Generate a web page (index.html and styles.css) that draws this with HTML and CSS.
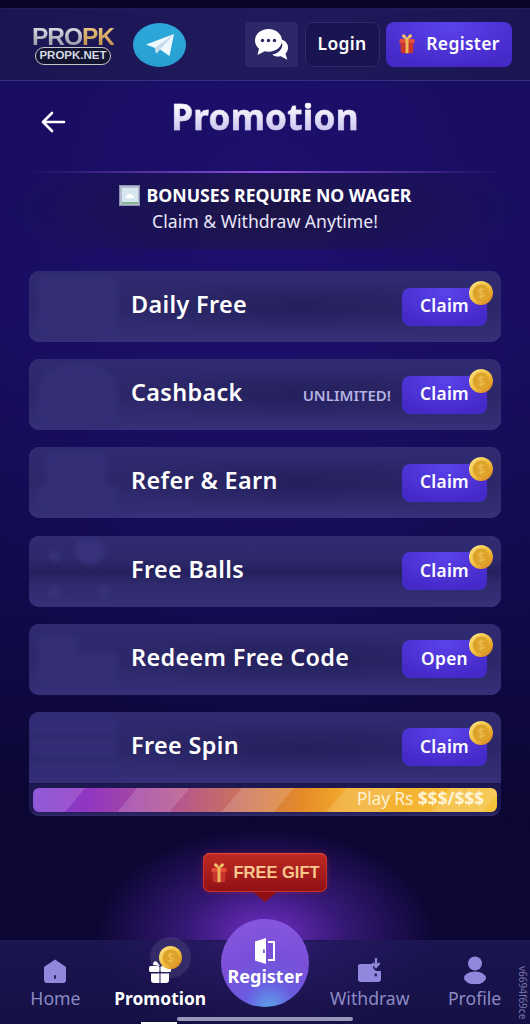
FILE: index.html
```html
<!DOCTYPE html>
<html lang="en">
<head>
<meta charset="utf-8">
<title>Promotion</title>
<link rel="stylesheet" href="styles.css">
</head>
<body>
<svg class="defs" width="0" height="0" aria-hidden="true">
  <defs>
    <linearGradient id="coinFill" x1="0" y1="0" x2="1" y2="1">
      <stop offset="0" stop-color="#ffe68a"/><stop offset="0.55" stop-color="#efbc3c"/><stop offset="1" stop-color="#d0761c"/>
    </linearGradient>
    <symbol id="coin" viewBox="0 0 24 24">
      <circle cx="12" cy="12" r="12" fill="url(#coinFill)"/>
      <circle cx="12" cy="12" r="8.400" fill="#dca22a"/>
      <path d="M15 8.800c-.8-.9-4.800-1.300-5 .9-.2 2.500 5.200 1.700 5 4.400-.2 2.100-4.400 1.800-5.600.7M12 6.500v11" fill="none" stroke="#eebf4c" stroke-width="1.200"/>
    </symbol>
    <symbol id="gift" viewBox="0 0 24 28">
      <path d="M12 8C9 8 5 6 5.500 3.200 6 .8 10 1 12 7c2-6 6-6.200 6.500-3.800C19 6 15 8 12 8Z" fill="#f1c264"/>
      <rect x="2" y="8" width="20" height="6" rx="1.500" fill="#e8503a"/>
      <path d="M3.500 13h17v11a3 3 0 0 1-3 3h-11a3 3 0 0 1-3-3Z" fill="#c9352c"/>
      <rect x="10" y="8" width="4" height="19" fill="#f0b65a"/>
    </symbol>
  </defs>
</svg>

<div class="page">
  <div class="status"></div>

  <header class="topbar">
    <div class="logo">
      <div class="logo-word"><span class="logo-silver">PRO</span><span class="logo-gold">PK</span></div>
      <div class="logo-pill">PROPK.NET</div>
    </div>
    <div class="telegram">
      <svg width="30" height="24" viewBox="0 0 30 24">
        <path d="M1 11.500 29 1 24.500 23 15 16.500 11 20.500 10 15Z" fill="#eef7fc"/>
        <path d="M10 15 29 1 15 16.500 12 20Z" fill="#c2dcec"/>
      </svg>
    </div>
    <div class="top-actions">
      <div class="chat-btn">
        <svg width="36" height="34" viewBox="0 0 36 34">
          <path d="M27 11.500c5 1 7.500 5 7 9-.3 2.300-1.300 4-2.500 5.200l1.800 6-6.500-3.500c-3 .8-6.300.3-8.500-1.700 6-1 10-5 10-10Z" fill="#fff"/>
          <path d="M14.500 1C6.800 1 1 6 1 12.500c0 3.300 1.500 6.200 4 8.300L3.500 27l7.200-3.700c1.200.3 2.500.4 3.800.4 7.700 0 13.500-5 13.500-11.200S22.200 1 14.500 1Z" fill="#fff"/>
          <circle cx="8.500" cy="12.500" r="1.700" fill="#2d2868"/><circle cx="14.500" cy="12.500" r="1.700" fill="#2d2868"/><circle cx="20.500" cy="12.500" r="1.700" fill="#2d2868"/>
        </svg>
      </div>
      <button class="login-btn">Login</button>
      <button class="register-btn">
        <svg class="reg-gift" width="18" height="21"><use href="#gift"/></svg>
        Register
      </button>
    </div>
  </header>

  <div class="title-row">
    <svg class="back" width="26" height="24" viewBox="0 0 26 24">
      <path d="M24 12H3M12 3l-9 9 9 9" fill="none" stroke="#fff" stroke-width="2.600" stroke-linecap="round" stroke-linejoin="round"/>
    </svg>
    <h1 class="title">Promotion</h1>
  </div>

  <section class="notice">
    <div class="notice-head">
      <svg class="broken" width="21" height="21" viewBox="0 0 21 21">
        <rect x="0.500" y="0.500" width="20" height="20" fill="#b6bcd0" stroke="#8c8fb0"/>
        <rect x="3" y="3" width="16" height="16" fill="#d7e7f0"/>
        <path d="M7 12c0-2 2-2 3-3 2-1 3 1 4 2 1 0 2 1 1 2H8c-1 0-1-1-1-1Z" fill="#fff"/>
        <rect x="3" y="17" width="16" height="2" fill="#84b58e"/>
      </svg>
      <span>BONUSES REQUIRE NO WAGER</span>
    </div>
    <div class="notice-sub">Claim &amp; Withdraw Anytime!</div>
  </section>

  <main class="list">
    <article class="card">
      <div class="card-row">
        <div class="art art-block"></div>
        <h2 class="card-title">Daily Free</h2>
        <button class="claim">Claim<svg class="coin" width="24" height="24"><use href="#coin"/></svg></button>
      </div>
    </article>
    <article class="card">
      <div class="card-row">
        <div class="art art-dome"></div>
        <h2 class="card-title">Cashback</h2>
        <span class="unlimited">UNLIMITED!</span>
        <button class="claim">Claim<svg class="coin" width="24" height="24"><use href="#coin"/></svg></button>
      </div>
    </article>
    <article class="card">
      <div class="card-row">
        <div class="art art-step"></div>
        <h2 class="card-title">Refer &amp; Earn</h2>
        <button class="claim">Claim<svg class="coin" width="24" height="24"><use href="#coin"/></svg></button>
      </div>
    </article>
    <article class="card">
      <div class="card-row row-band">
        <div class="art art-balls"></div>
        <h2 class="card-title">Free Balls</h2>
        <button class="claim">Claim<svg class="coin" width="24" height="24"><use href="#coin"/></svg></button>
      </div>
    </article>
    <article class="card">
      <div class="card-row">
        <div class="art art-wide"></div>
        <h2 class="card-title">Redeem Free Code</h2>
        <button class="claim">Open<svg class="coin" width="24" height="24"><use href="#coin"/></svg></button>
      </div>
    </article>
    <article class="card card-spin">
      <div class="card-row">
        <div class="art art-bars"></div>
        <h2 class="card-title">Free Spin</h2>
        <button class="claim">Claim<svg class="coin" width="24" height="24"><use href="#coin"/></svg></button>
      </div>
      <div class="progress-wrap">
        <div class="progress">Play Rs&nbsp;<b>$$$/$$$</b></div>
      </div>
    </article>
  </main>

  <div class="glow"></div>

  <div class="gift-tag">
    <svg width="18" height="21"><use href="#gift"/></svg>
    <span>FREE GIFT</span>
  </div>

  <nav class="tabbar">
    <a class="tab">
      <svg class="tab-icon" width="26" height="26" viewBox="0 0 26 26">
        <path d="M13 1.500 24 9v13a3 3 0 0 1-3 3H5a3 3 0 0 1-3-3V9Z" fill="#8f88dc"/>
        <rect x="12" y="17" width="2" height="4" rx="1" fill="#2a2260"/>
      </svg>
      <span>Home</span>
    </a>
    <a class="tab tab-active">
      <span class="promo-icon">
        <svg class="tab-icon" width="26" height="26" viewBox="0 0 26 26">
          <path d="M6 7c0-3 2-5 4-3l3 4Z" fill="#fff"/>
          <rect x="2" y="8" width="10.500" height="6" rx="1.500" fill="#fff"/>
          <rect x="13.500" y="8" width="10.500" height="6" rx="1.500" fill="#fff"/>
          <path d="M4 15.500h8.500V25H7a3 3 0 0 1-3-3ZM13.500 15.500H22V22a3 3 0 0 1-3 3h-5.500Z" fill="#fff"/>
        </svg>
        <span class="promo-halo"></span>
        <svg class="promo-coin" width="23" height="23"><use href="#coin"/></svg>
      </span>
      <span>Promotion</span>
    </a>
    <span class="tab-gap"></span>
    <a class="tab">
      <svg class="tab-icon" width="26" height="26" viewBox="0 0 26 26">
        <path d="M3 6h13v2c0 3 2 5 5 5h3v8a3 3 0 0 1-3 3H4a3 3 0 0 1-3-3V8a2 2 0 0 1 2-2Z" fill="#8f88dc"/>
        <path d="M19 0v7M15.500 5l3.500 4 3.500-4" fill="none" stroke="#8f88dc" stroke-width="2.200"/>
        <rect x="17.500" y="15.500" width="2.500" height="3" rx="1" fill="#2a2260"/>
      </svg>
      <span>Withdraw</span>
    </a>
    <a class="tab">
      <svg class="tab-icon" width="26" height="28" viewBox="0 0 26 28">
        <circle cx="13" cy="7.500" r="7" fill="#8f88dc"/>
        <ellipse cx="13" cy="22" rx="11" ry="6.500" fill="#8f88dc"/>
      </svg>
      <span>Profile</span>
    </a>
    <button class="fab">
      <svg width="22" height="26" viewBox="0 0 22 26">
        <path d="M1 3.500 12 0v26L1 22.500Z" fill="#fff"/>
        <path d="M14 3h7v20h-7v-2h5V5h-5Z" fill="#fff"/>
        <rect x="9" y="11.500" width="1.800" height="3.500" fill="#7a58d8"/>
      </svg>
      <span>Register</span>
    </button>
    <span class="version">v6694f69ce</span>
    <span class="tab-mark"></span>
    <span class="home-bar"></span>
  </nav>
</div>
</body>
</html>
```
FILE: styles.css
```css
* { box-sizing: border-box; }
html, body { margin: 0; padding: 0; }
body {
  width: 530px;
  height: 1024px;
  overflow: hidden;
  background: #0b0631;
  font-family: "Noto Sans", "Open Sans", sans-serif;
  color: #fff;
}
.defs { position: absolute; }
button { font-family: inherit; border: 0; padding: 0; color: #fff; }

.page {
  position: relative;
  display: flex;
  flex-direction: column;
  width: 530px;
  height: 1024px;
  overflow: hidden;
  background:
    radial-gradient(ellipse 330px 520px at 265px 240px, rgba(34, 18, 120, 0.55), rgba(34, 18, 120, 0) 100%),
    linear-gradient(180deg, #170c5e 8%, #180d60 30%, #110a49 60%, #0b0632 80%, #0c0734 100%);
}
.status { flex: none; height: 8px; background: #090428; }

/* top bar */
.topbar {
  flex: none;
  display: flex;
  align-items: center;
  height: 73px;
  padding: 0 18px 0 33px;
  background: linear-gradient(90deg, #1b1552, #1f1a5c 50%, #1b1552);
  border-top: 1px solid #221c5c;
  border-bottom: 1px solid #35307e;
}
.logo { display: flex; flex-direction: column; align-items: center; width: 80px; }
.logo-word { font-family: "Liberation Sans", sans-serif; font-weight: 700; font-size: 24.5px; line-height: 23px; letter-spacing: -1px; }
.logo-silver {
  background: linear-gradient(180deg, #e8e8f0, #8f8f9c);
  -webkit-background-clip: text; background-clip: text; color: transparent;
}
.logo-gold {
  background: linear-gradient(180deg, #f3d18e, #b8843e);
  -webkit-background-clip: text; background-clip: text; color: transparent;
}
.logo-pill {
  width: 76px;
  height: 18px;
  margin-top: -1px;
  border: 1.5px solid #c9c4c8;
  border-radius: 9px;
  background: #121430;
  color: #d7dae6;
  font-family: "Liberation Sans", sans-serif;
  font-weight: 700;
  font-size: 11.5px;
  line-height: 15px;
  text-align: center;
}
.telegram {
  flex: none;
  display: flex;
  align-items: center;
  justify-content: center;
  width: 53px;
  height: 44px;
  margin-left: 20px;
  border-radius: 50%;
  background: linear-gradient(180deg, #2ea8dc, #27a0d0);
}
.top-actions { display: flex; align-items: center; gap: 6.5px; margin-left: auto; height: 45px; }
.chat-btn {
  display: flex;
  align-items: center;
  justify-content: center;
  width: 53px;
  height: 45px;
  border-radius: 4px;
  background: #2d2868;
}
.login-btn {
  width: 75px;
  height: 45px;
  border: 1px solid #2f2a69;
  border-radius: 8px;
  background: #1a1550;
  font-size: 17.5px;
  font-weight: 600;
  letter-spacing: 0.3px;
  padding-bottom: 3px;
}
.register-btn {
  display: flex;
  align-items: center;
  justify-content: center;
  gap: 10px;
  width: 126px;
  height: 45px;
  padding-bottom: 3px;
  border-radius: 8px;
  background: radial-gradient(ellipse 70% 90% at 50% 10%, #5a43ea, #4528c8);
  font-size: 17.5px;
  font-weight: 600;
  letter-spacing: 0.3px;
}

/* title */
.title-row {
  flex: none;
  position: relative;
  display: flex;
  justify-content: center;
  height: 90px;
}
.back { position: absolute; left: 40px; top: 29px; }
.title {
  margin: 11px 0 0;
  font-size: 35px;
  line-height: 50px;
  height: 50px;
  font-weight: 700;
  letter-spacing: 0.3px;
  background: linear-gradient(180deg, #fff 25%, #cdc6f2 75%, #a29adf 100%);
  -webkit-background-clip: text; background-clip: text; color: transparent;
  -webkit-text-stroke: 0.5px rgba(230, 225, 250, 0.55);
}

/* notice */
.notice {
  flex: none;
  height: 78px;
  padding-top: 11px;
  text-align: center;
  background:
    linear-gradient(90deg, rgba(138, 70, 230, 0) 5%, #8a50e0 50%, rgba(138, 70, 230, 0) 95%) top / 100% 2px no-repeat,
    radial-gradient(ellipse 50% 100% at 50% 50%, rgba(28, 22, 64, 0.9), rgba(28, 22, 64, 0) 100%);
}
.notice-head {
  display: flex;
  align-items: center;
  justify-content: center;
  gap: 7px;
  font-size: 17.7px;
  font-weight: 700;
  line-height: 26px;
}
.broken { flex: none; }
.notice-sub { font-size: 17.6px; line-height: 26px; color: #e8e6f6; }

/* list */
.list {
  flex: none;
  display: flex;
  flex-direction: column;
  gap: 17.2px;
  padding: 22px 29px 0;
}
.card {
  border-radius: 10px;
  background: #332e74;
  overflow: hidden;
}
.card-row {
  position: relative;
  display: flex;
  align-items: center;
  height: 71px;
  padding-right: 14px;
  background:
    radial-gradient(ellipse 44% 38% at 58% 50%, rgba(36, 31, 92, 0.95), rgba(36, 31, 92, 0) 100%),
    linear-gradient(180deg, #302b72 0, #2d2869 50%, #353078 100%);
}
.row-band {
  background:
    linear-gradient(180deg, rgba(36, 31, 92, 0) 30%, rgba(36, 31, 92, 0.9) 50%, rgba(36, 31, 92, 0) 68%),
    linear-gradient(180deg, #302b72 0, #2d2869 50%, #353078 100%);
}
.art {
  --tint: #332e76;
  flex: none;
  width: 80px;
  height: 62px;
  margin: 0 13px 0 9px;
  filter: blur(2.5px);
}
.art-block { background: var(--tint); border-radius: 8px; }
.art-dome { background: var(--tint); border-radius: 44% 44% 8px 8px; }
.art-step {
  background:
    linear-gradient(var(--tint), var(--tint)) 8px 0 / 60px 40px no-repeat,
    linear-gradient(var(--tint), var(--tint)) 0 34px / 80px 28px no-repeat;
}
.art-wide {
  background:
    linear-gradient(var(--tint), var(--tint)) 0 24px / 80px 38px no-repeat,
    linear-gradient(var(--tint), var(--tint)) 0 8px / 40px 20px no-repeat;
}
.art-balls {
  background:
    radial-gradient(circle 15px at 52px 10px, #37327b 96%, rgba(55, 50, 123, 0) 100%),
    radial-gradient(circle 6px at 16px 16px, #37327b 90%, rgba(55, 50, 123, 0) 100%),
    radial-gradient(circle 6px at 16px 52px, #37327b 90%, rgba(55, 50, 123, 0) 100%),
    radial-gradient(circle 6px at 66px 52px, #37327b 90%, rgba(55, 50, 123, 0) 100%);
}
.art-bars {
  width: 88px;
  margin: 0 13px 0 1px;
  background: linear-gradient(180deg, #322d76 0 30%, #2d2969 30% 36%, #322d76 36% 66%, #2d2969 66% 72%, #322d76 72% 100%);
}
.card-title {
  flex: 1;
  margin: 0;
  padding-bottom: 5px;
  font-size: 23.4px;
  font-weight: 600;
  letter-spacing: 0.35px;
  color: #fff;
}
.unlimited {
  margin-right: 11px;
  font-size: 15px;
  font-weight: 600;
  color: #b5b3e3;
}
.claim {
  position: relative;
  flex: none;
  width: 85px;
  height: 38px;
  padding-bottom: 2px;
  border-radius: 8px;
  background: radial-gradient(ellipse 70% 90% at 50% 10%, #5a43ea, #4528c8);
  font-size: 17.3px;
  font-weight: 600;
  letter-spacing: 0.3px;
}
.coin { position: absolute; top: -7px; right: -6px; }

.card-spin { padding-bottom: 4px; background: #28235f; box-shadow: inset 0 0 0 1px #2f2a6c; }
.progress-wrap { padding: 4px 4px 0; background: #1d1950; border-top: 1px solid #1c184c; }
.progress {
  display: flex;
  justify-content: flex-end;
  align-items: center;
  height: 24px;
  padding-right: 13px;
  padding-bottom: 3px;
  border-radius: 6px;
  font-size: 17.6px;
  letter-spacing: -0.2px;
  color: #fdf0d0;
  background:
    repeating-linear-gradient(130deg, rgba(255, 255, 255, 0.14) 0 40px, rgba(255, 255, 255, 0) 40px 80px),
    linear-gradient(90deg, #7c3fd2 0%, #9136c0 12%, #b85a88 33%, #d07a50 48%, #e58a28 58%, #f2ac2c 68%, #f5c23c 100%);
}
.progress b { font-weight: 700; color: #fff3d4; }

/* glow behind the centre tab */
.glow {
  position: absolute;
  left: 95px;
  top: 810px;
  width: 340px;
  height: 214px;
  background: radial-gradient(ellipse 50% 50% at 50% 58%, rgba(125, 50, 215, 0.9), rgba(90, 40, 175, 0.55) 45%, rgba(60, 30, 130, 0) 100%);
}

.gift-tag {
  position: absolute;
  left: 203px;
  top: 853px;
  display: flex;
  align-items: center;
  justify-content: center;
  gap: 5px;
  width: 124px;
  height: 39px;
  border-radius: 7px;
  background: linear-gradient(180deg, #c02a24, #8f1014);
  box-shadow: inset 0 1px 0 #e04a3a, inset 0 0 0 1px #c9322a, 0 0 6px rgba(200, 40, 40, 0.35);
  color: #f9c88e;
  font-family: "Liberation Sans", sans-serif;
  font-weight: 700;
  font-size: 16.5px;
  z-index: 2;
}
.gift-tag::after {
  content: "";
  position: absolute;
  left: 50px;
  bottom: -10px;
  border-style: solid;
  border-width: 10px 12px 0;
  border-color: #8f1014 transparent transparent;
}

/* tab bar */
.tabbar {
  position: absolute;
  left: 0;
  right: 0;
  bottom: 0;
  display: grid;
  grid-template-columns: repeat(5, 1fr);
  height: 84px;
  padding: 0 3px;
  background: linear-gradient(180deg, rgba(30, 24, 88, 0.78), rgba(24, 19, 72, 0.8));
  border-top: 1px solid #1e1850;
}
.tab {
  display: flex;
  flex-direction: column;
  align-items: center;
  justify-content: flex-end;
  padding-bottom: 14px;
  gap: 3px;
  font-size: 17.6px;
  line-height: 23px;
  color: #8d8ac4;
}
.tab-icon { display: block; }
.tab-active { color: #fff; font-weight: 700; font-size: 17.4px; }
.promo-icon { position: relative; display: block; width: 26px; height: 26px; }
.promo-halo {
  position: absolute;
  left: 3px;
  top: -21px;
  width: 41px;
  height: 41px;
  border-radius: 50%;
  background: rgba(255, 255, 255, 0.09);
}
.promo-coin { position: absolute; left: 12px; top: -12px; }
.fab {
  position: absolute;
  left: 221px;
  top: -22px;
  display: flex;
  flex-direction: column;
  align-items: center;
  width: 88px;
  height: 88px;
  padding-top: 19px;
  border-radius: 50%;
  background: radial-gradient(circle at 55% 100%, #5da0ea 0, #6a5ce0 25%, #7a4fd8 55%, #8a5ae0 100%);
  font-size: 18px;
  font-weight: 700;
  line-height: 25px;
}
.version {
  position: absolute;
  right: 1px;
  top: 25px;
  writing-mode: vertical-rl;
  font-size: 10px;
  line-height: 12px;
  color: #7b78aa;
}
.tab-mark { position: absolute; left: 141px; bottom: 0; width: 36px; height: 2px; background: #fff; }
.home-bar {
  position: absolute;
  left: 177px;
  bottom: 3px;
  width: 176px;
  height: 4px;
  border-radius: 2px;
  background: #9a98ba;
}
```
